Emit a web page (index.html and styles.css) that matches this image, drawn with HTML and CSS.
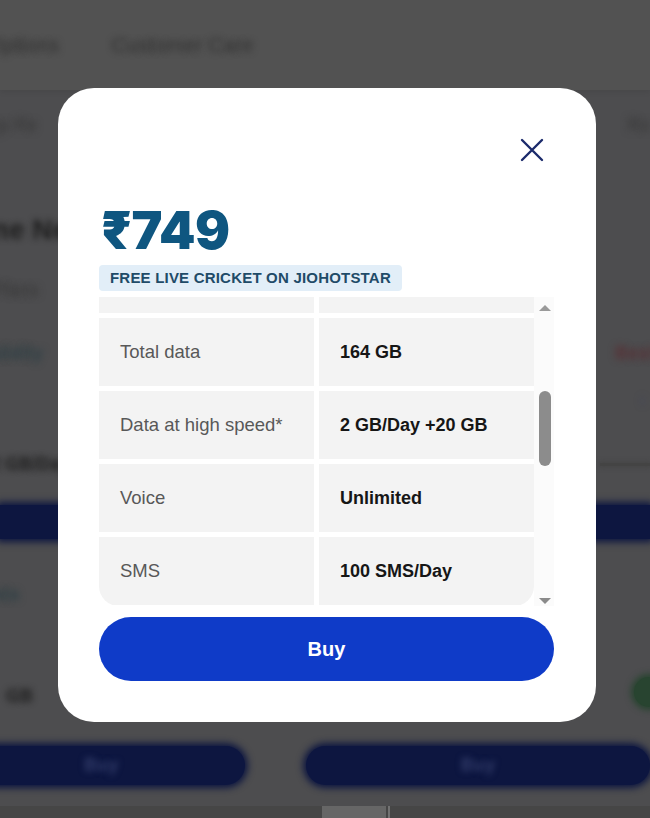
FILE: index.html
```html
<!DOCTYPE html>
<html lang="en">
<head>
<meta charset="utf-8">
<title>Plan details</title>
<link rel="stylesheet" href="styles.css">
</head>
<body>
<div class="page" aria-hidden="true">
  <header class="nav">
    <span class="nav-item nav-first">Recharge Options</span>
    <span class="nav-item">Customer Care</span>
  </header>
  <div class="bg-row r1"><span class="bt c-gray">Top Re</span><span class="bt c-gray">Ro</span></div>
  <div class="bg-row r2"><span class="bt big c-dark">One Ne</span></div>
  <div class="bg-row r3"><span class="bt c-gray">Plans</span></div>
  <div class="bg-row r4"><span class="bt c-teal">Validity</span><span class="bt c-red">Best</span></div>
  <div class="bg-row r5"><span class="bt small c-blue">i</span></div>
  <div class="bg-row r6"><span class="bt c-dark">2 GB/Day</span><span class="bg-line"></span></div>
  <div class="bg-band"></div>
  <div class="bg-row r7"><span class="bt c-teal">Data</span></div>
  <div class="bg-row r8"><span class="bt c-dark">GB</span><span class="bg-dot"></span></div>
  <div class="bg-buttons">
    <span class="bg-btn bg-btn-left">Buy</span>
    <span class="bg-gap"></span>
    <span class="bg-btn bg-btn-right">Buy</span>
  </div>
  <div class="bg-bottom"><span class="bg-thumb"></span><span class="bg-tick"></span></div>
</div>

<div class="modal" role="dialog" aria-label="Plan ₹749">
  <div class="modal-head">
    <button class="close" aria-label="Close">
      <svg viewBox="0 0 24 24" width="24" height="24"><path d="M2 2 L22 22 M22 2 L2 22" stroke="#1b2a6b" stroke-width="2.4" stroke-linecap="round" fill="none"/></svg>
    </button>
  </div>
  <div class="price">₹749</div>
  <div class="badge">FREE LIVE CRICKET ON JIOHOTSTAR</div>
  <div class="table-wrap">
    <div class="viewport">
      <div class="rows">
        <div class="row"><div class="cell label">Validity</div><div class="cell value">72 Days</div></div>
        <div class="row"><div class="cell label">Total data</div><div class="cell value">164 GB</div></div>
        <div class="row"><div class="cell label">Data at high speed*</div><div class="cell value">2 GB/Day +20 GB</div></div>
        <div class="row"><div class="cell label">Voice</div><div class="cell value">Unlimited</div></div>
        <div class="row last"><div class="cell label">SMS</div><div class="cell value">100 SMS/Day</div></div>
      </div>
    </div>
    <div class="scrollbar">
      <span class="arrow-up"></span>
      <span class="thumb"></span>
      <span class="arrow-down"></span>
    </div>
  </div>
  <button class="buy">Buy</button>
</div>
</body>
</html>
```
FILE: styles.css
```css
* { box-sizing: border-box; }
html, body { margin: 0; padding: 0; }
body {
  width: 650px;
  height: 818px;
  overflow: hidden;
  background: #4d4d4f;
  font-family: "Liberation Sans", Arial, sans-serif;
  position: relative;
}

/* blurred page behind the dialog (blur drawn with soft shadows) */
.page {
  display: flex;
  flex-direction: column;
  height: 818px;
  overflow: hidden;
}
.nav {
  height: 90px;
  background: #525252;
  box-shadow: 0 2px 6px rgba(0,0,0,0.08);
  display: flex;
  align-items: center;
  gap: 52px;
  font-size: 21px;
  color: transparent;
  text-shadow: 0 0 6px #333;
  white-space: nowrap;
}
.nav-first { margin-left: -110px; }
.bg-row {
  display: flex;
  justify-content: space-between;
  align-items: center;
  white-space: nowrap;
}
.bt { font-size: 18px; color: transparent; }
.big { font-size: 28px; font-weight: bold; margin-left: -30px; }
.small { font-size: 13px; }
.c-gray { text-shadow: 0 0 7px #383838; }
.c-dark { font-weight: bold; text-shadow: 0 0 6px #1e1e1e; }
.c-teal { font-weight: bold; margin-left: -20px; text-shadow: 0 0 7px #2f4046; }
.c-red { font-weight: bold; margin-right: -4px; text-shadow: 0 0 7px #583035; }
.c-blue { margin-right: 6px; text-shadow: 0 0 7px #3c4466; }
.r1 { height: 70px; margin-left: -20px; }
.r2 { height: 90px; padding-top: 50px; }
.r3 { height: 70px; padding-top: 10px; margin-left: -6px; }
.r4 { height: 60px; padding-top: 6px; }
.r5 { height: 40px; justify-content: flex-end; }
.r6 { height: 70px; padding-top: 18px; margin-left: -10px; }
.bg-line { width: 50px; height: 3px; background: #444; box-shadow: 0 0 5px 1px #444; }
.bg-band {
  height: 34px;
  margin-top: 15px;
  background: #0d1640;
  box-shadow: 0 0 7px 3px #0d1640;
}
.r7 { height: 100px; padding-top: 10px; }
.r8 { height: 85px; padding-top: 30px; margin-left: 6px; }
.bg-dot { width: 30px; height: 30px; border-radius: 50%; background: #284430; box-shadow: 0 0 6px 3px #284430; margin-right: -14px; margin-top: -10px; }
.bg-buttons {
  height: 82px;
  display: flex;
  align-items: center;
}
.bg-btn {
  height: 39px;
  border-radius: 20px;
  background: #0d1640;
  box-shadow: 0 0 7px 3px #0d1640;
  color: transparent;
  text-shadow: 0 0 6px #333d6a;
  font-weight: bold;
  font-size: 18px;
  display: flex;
  align-items: center;
  justify-content: center;
}
.bg-btn-left { width: 300px; margin-left: -42px; }
.bg-gap { width: 64px; }
.bg-btn-right { width: 360px; }
.bg-bottom {
  flex: 1;
  background: #464646;
  display: flex;
  padding-left: 322px;
}
.bg-thumb { width: 64px; background: #666; }
.bg-tick { width: 2px; margin-left: 2px; background: #727272; }

/* dialog */
.modal {
  position: absolute;
  left: 58px;
  top: 88px;
  width: 538px;
  height: 634px;
  background: #fff;
  border-radius: 36px;
  padding: 50px 42px 41px 41px;
  display: flex;
  flex-direction: column;
}
.modal-head {
  height: 24px;
  display: flex;
  justify-content: flex-end;
  padding-right: 10px;
}
.close {
  width: 24px;
  height: 24px;
  padding: 0;
  border: 0;
  background: none;
  display: block;
}
.close svg { display: block; }
.price {
  margin-top: 43px;
  height: 51px;
  line-height: 51px;
  font-family: Inter, "Noto Sans", sans-serif;
  font-weight: 900;
  font-size: 52px;
  color: #0f5680;
  padding-left: 2px;
  letter-spacing: -0.5px;
}
.badge {
  margin-top: 9px;
  align-self: flex-start;
  height: 26px;
  line-height: 26px;
  padding: 0 11px;
  background: #e2eef8;
  border-radius: 4px;
  color: #1f4b68;
  font-weight: bold;
  font-size: 15px;
  letter-spacing: 0.2px;
}
.table-wrap {
  margin-top: 6px;
  height: 309px;
  display: flex;
}
.viewport {
  flex: 1;
  overflow: hidden;
  border-radius: 0 0 20px 20px;
}
.rows {
  margin-top: -52px;
  display: flex;
  flex-direction: column;
  gap: 5px;
}
.row {
  height: 68px;
  display: grid;
  grid-template-columns: 1fr 1fr;
  gap: 5px;
}
.cell {
  background: #f3f3f3;
  display: flex;
  align-items: center;
  padding-left: 21px;
  font-size: 18.5px;
}
.label { color: #585858; }
.value { color: #161616; font-weight: bold; font-size: 18px; }
.scrollbar {
  width: 20px;
  background: #fbfbfb;
  display: flex;
  flex-direction: column;
  align-items: center;
  padding: 8px 0 2px 1px;
}
.arrow-up {
  width: 0; height: 0;
  border-left: 6px solid transparent;
  border-right: 6px solid transparent;
  border-bottom: 6px solid #9a9a9a;
}
.thumb {
  margin-top: 80px;
  width: 12px;
  height: 75px;
  border-radius: 6px;
  background: #8c8c8c;
}
.arrow-down {
  margin-top: auto;
  width: 0; height: 0;
  border-left: 6px solid transparent;
  border-right: 6px solid transparent;
  border-top: 6px solid #8a8a8a;
}
.buy {
  margin-top: 11px;
  height: 64px;
  border: 0;
  border-radius: 32px;
  background: #0f3bc8;
  color: #fff;
  font-family: "Liberation Sans", Arial, sans-serif;
  font-weight: bold;
  font-size: 20px;
}
```
